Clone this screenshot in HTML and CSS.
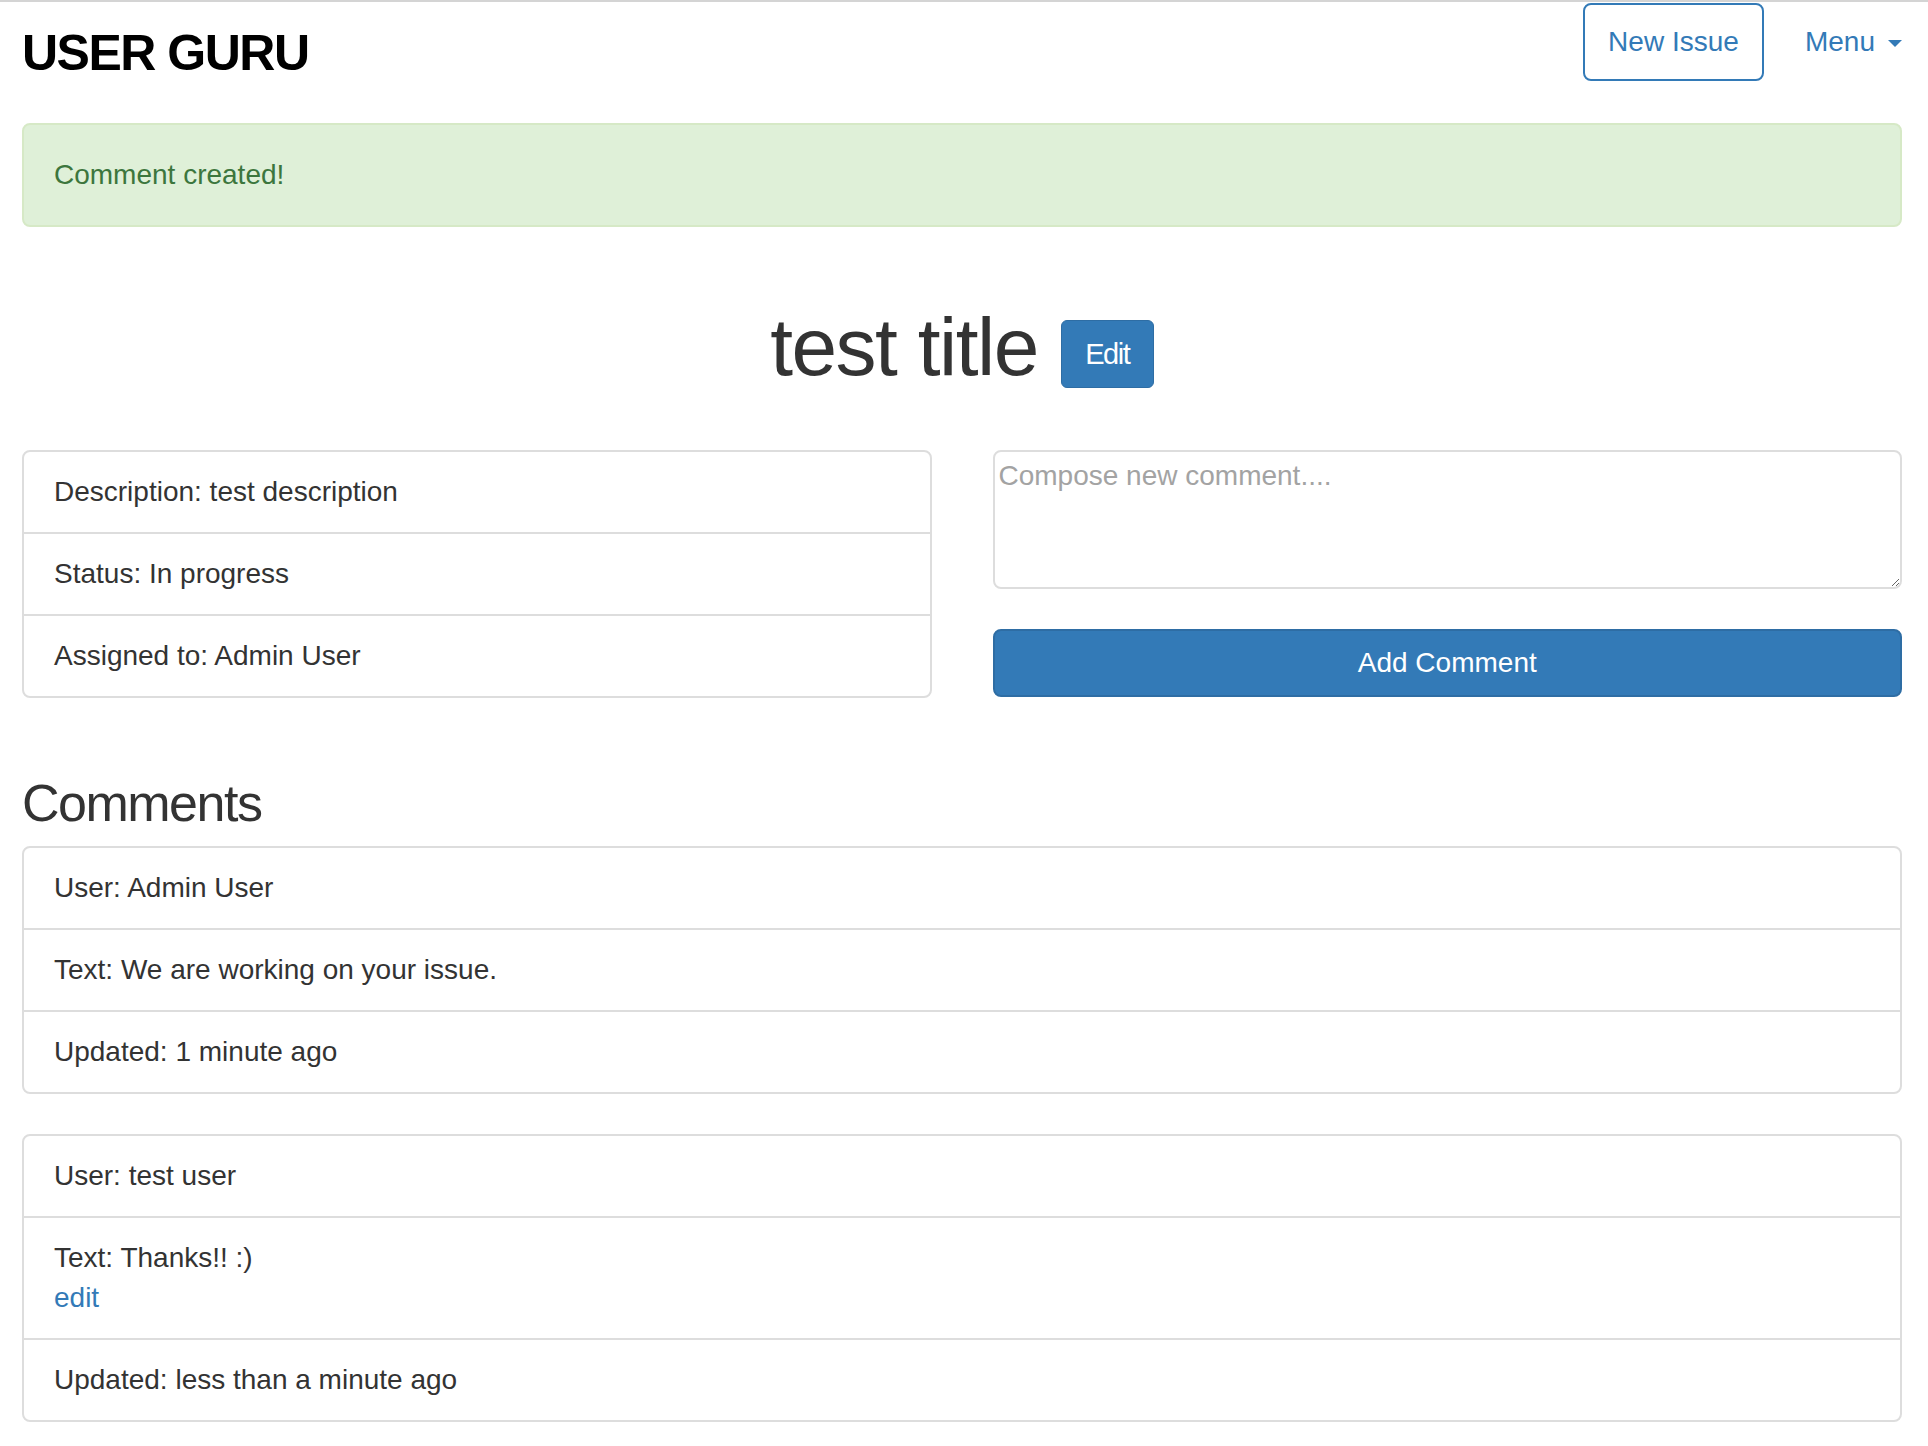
FILE: index.html
```html
<!DOCTYPE html>
<html lang="en">
<head>
<meta charset="utf-8">
<title>User Guru</title>
<link rel="stylesheet" href="styles.css">
</head>
<body>
<div class="page">
  <header class="header">
    <div class="brand">USER GURU</div>
    <nav class="nav">
      <a class="btn-outline" href="#">New Issue</a>
      <a class="menu" href="#">Menu <span class="caret"></span></a>
    </nav>
  </header>

  <div class="alert">Comment created!</div>

  <div class="title-row">
    <h1 class="title">test title</h1>
    <a class="btn-edit" href="#">Edit</a>
  </div>

  <div class="columns">
    <ul class="list">
      <li class="item">Description: test description</li>
      <li class="item">Status: In progress</li>
      <li class="item">Assigned to: Admin User</li>
    </ul>
    <form class="comment-form">
      <textarea class="textarea" placeholder="Compose new comment...."></textarea>
      <button class="btn-primary" type="button">Add Comment</button>
    </form>
  </div>

  <h2 class="section-title">Comments</h2>

  <ul class="list list-spaced">
    <li class="item">User: Admin User</li>
    <li class="item">Text: We are working on your issue.</li>
    <li class="item">Updated: 1 minute ago</li>
  </ul>

  <ul class="list">
    <li class="item">User: test user</li>
    <li class="item">Text: Thanks!! :)<br><a class="link" href="#">edit</a></li>
    <li class="item">Updated: less than a minute ago</li>
  </ul>
</div>
</body>
</html>
```

FILE: styles.css
```css
html, body {
  margin: 0;
  padding: 0;
  background: #fff;
}

body {
  border-top: 2px solid #d4d4d4;
  font-family: "Liberation Sans", Arial, Helvetica, sans-serif;
  font-size: 28px;
  line-height: 40px;
  color: #333;
}

.page {
  padding: 0 26px 0 22px;
}

.header {
  display: flex;
  justify-content: space-between;
  align-items: flex-start;
  height: 80px;
}

.brand {
  margin-top: 26px;
  font-size: 50px;
  line-height: 50px;
  font-weight: bold;
  letter-spacing: -1.5px;
  color: #000;
}

.nav {
  display: flex;
  align-items: flex-start;
  margin-top: 1px;
}

.btn-outline {
  display: block;
  box-sizing: border-box;
  width: 181px;
  height: 78px;
  line-height: 74px;
  text-align: center;
  border: 2px solid #337ab7;
  border-radius: 8px;
  color: #337ab7;
  text-decoration: none;
}

.menu {
  display: flex;
  align-items: center;
  margin-left: 41px;
  height: 78px;
  color: #337ab7;
  text-decoration: none;
}

.caret {
  display: inline-block;
  width: 0;
  height: 0;
  margin-left: 13px;
  margin-top: 2px;
  border-top: 7px solid #337ab7;
  border-left: 7.5px solid transparent;
  border-right: 7.5px solid transparent;
}

.alert {
  margin-top: 41px;
  padding: 30px 30px;
  background: #dff0d8;
  border: 2px solid #d6e9c6;
  border-radius: 8px;
  color: #3c763d;
}

.title-row {
  display: flex;
  justify-content: center;
  align-items: flex-start;
  margin-top: 75px;
}

.title {
  margin: 0;
  font-size: 82px;
  line-height: 90px;
  font-weight: normal;
  letter-spacing: -1.5px;
  color: #333;
}

.btn-edit {
  display: block;
  box-sizing: border-box;
  width: 93px;
  height: 68px;
  margin-top: 18px;
  margin-left: 23px;
  line-height: 66px;
  text-align: center;
  font-size: 29px;
  letter-spacing: -1.5px;
  background: #337ab7;
  border: 1px solid #2e6da4;
  border-radius: 6px;
  color: #fff;
  text-decoration: none;
}

.columns {
  display: grid;
  grid-template-columns: 1fr 1fr;
  column-gap: 61px;
  margin-top: 58px;
  align-items: start;
}

.list {
  list-style: none;
  margin: 0;
  padding: 0;
  border: 2px solid #ddd;
  border-radius: 8px;
}

.item {
  padding: 20px 30px;
  line-height: 40px;
}

.item + .item {
  border-top: 2px solid #ddd;
}

.list-spaced {
  margin-bottom: 40px;
}

.comment-form {
  display: flex;
  flex-direction: column;
  margin: 0;
}

.textarea {
  box-sizing: border-box;
  display: block;
  width: 100%;
  height: 139px;
  margin: 0;
  padding: 4px;
  border: 2px solid #ddd;
  border-radius: 8px;
  font-family: "Liberation Sans", Arial, Helvetica, sans-serif;
  font-size: 28px;
  line-height: 40px;
  color: #333;
  resize: vertical;
}

.textarea::placeholder {
  color: #a3a3a3;
}

.btn-primary {
  box-sizing: border-box;
  display: block;
  width: 100%;
  height: 68px;
  margin-top: 40px;
  padding: 0;
  background: #337ab7;
  border: 2px solid #2e6da4;
  border-radius: 8px;
  color: #fff;
  font-family: "Liberation Sans", Arial, Helvetica, sans-serif;
  font-size: 28px;
  line-height: 64px;
  text-align: center;
}

.section-title {
  margin: 77px 0 14px;
  font-size: 52px;
  line-height: 57px;
  font-weight: normal;
  letter-spacing: -1.5px;
  color: #333;
}

.link {
  color: #337ab7;
  text-decoration: none;
}
```
